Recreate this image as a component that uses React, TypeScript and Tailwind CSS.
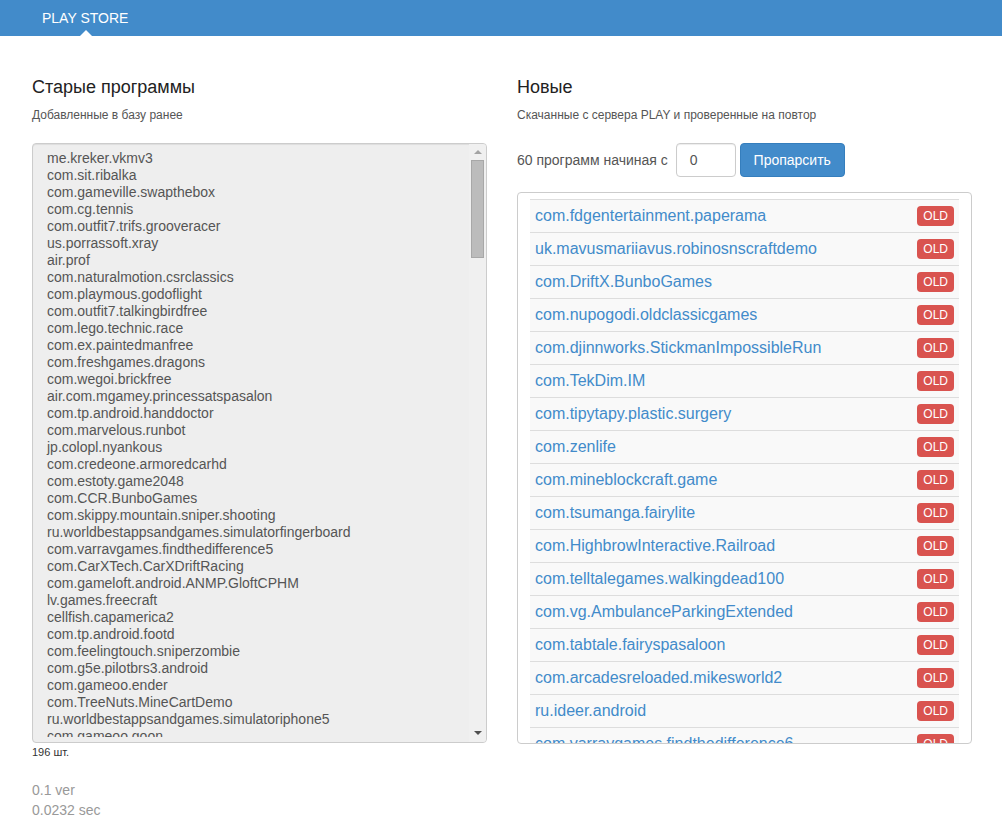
const oldApps = [
  "me.kreker.vkmv3",
  "com.sit.ribalka",
  "com.gameville.swapthebox",
  "com.cg.tennis",
  "com.outfit7.trifs.grooveracer",
  "us.porrassoft.xray",
  "air.prof",
  "com.naturalmotion.csrclassics",
  "com.playmous.godoflight",
  "com.outfit7.talkingbirdfree",
  "com.lego.technic.race",
  "com.ex.paintedmanfree",
  "com.freshgames.dragons",
  "com.wegoi.brickfree",
  "air.com.mgamey.princessatspasalon",
  "com.tp.android.handdoctor",
  "com.marvelous.runbot",
  "jp.colopl.nyankous",
  "com.credeone.armoredcarhd",
  "com.estoty.game2048",
  "com.CCR.BunboGames",
  "com.skippy.mountain.sniper.shooting",
  "ru.worldbestappsandgames.simulatorfingerboard",
  "com.varravgames.findthedifference5",
  "com.CarXTech.CarXDriftRacing",
  "com.gameloft.android.ANMP.GloftCPHM",
  "lv.games.freecraft",
  "cellfish.capamerica2",
  "com.tp.android.footd",
  "com.feelingtouch.sniperzombie",
  "com.g5e.pilotbrs3.android",
  "com.gameoo.ender",
  "com.TreeNuts.MineCartDemo",
  "ru.worldbestappsandgames.simulatoriphone5",
  "com.gameoo.goon",
  "com.gameoo.run",
]

const newApps = [
  "com.fdgentertainment.paperama",
  "uk.mavusmariiavus.robinosnscraftdemo",
  "com.DriftX.BunboGames",
  "com.nupogodi.oldclassicgames",
  "com.djinnworks.StickmanImpossibleRun",
  "com.TekDim.IM",
  "com.tipytapy.plastic.surgery",
  "com.zenlife",
  "com.mineblockcraft.game",
  "com.tsumanga.fairylite",
  "com.HighbrowInteractive.Railroad",
  "com.telltalegames.walkingdead100",
  "com.vg.AmbulanceParkingExtended",
  "com.tabtale.fairyspasaloon",
  "com.arcadesreloaded.mikesworld2",
  "ru.ideer.android",
  "com.varravgames.findthedifference6",
  "com.varravgames.findthedifference7",
]

export default function App() {
  return (
    <div className="min-h-[837px] bg-white text-[#333] font-['Liberation_Sans',Arial,sans-serif]">

      {/* Navbar */}

      <div className="h-[36px] bg-[#428bca] px-[42px] flex items-center">
        <div className="relative h-full flex items-center text-white text-[14px]">
          PLAY STORE
          <div className="absolute bottom-0 left-[38px] w-0 h-0 border-l-[6px] border-r-[6px] border-b-[6px] border-l-transparent border-r-transparent border-b-white" />
        </div>
      </div>

      <div className="pl-[32px] flex gap-[30px]">

        {/* Old apps */}

        <div className="w-[455px] shrink-0">
          <h3 className="mt-[41px] text-[18px] leading-[20px] text-[#222]">Старые программы</h3>
          <p className="mt-[10px] text-[12px] leading-[16px] text-[#555]">Добавленные в базу ранее</p>

          <div className="mt-[20px] h-[600px] flex overflow-hidden rounded-[4px] border border-[#ccc] bg-[#eee] shadow-[inset_0_1px_1px_rgba(0,0,0,0.075)]">
            <div className="flex-1 self-start h-[593px] pl-[14px] pt-[6px] text-[14px] leading-[17px] text-[#555] overflow-hidden">
              {oldApps.map((a) => (
                <div key={a} className="whitespace-nowrap">{a}</div>
              ))}
            </div>
            <div className="w-[17px] bg-[#f0f0f0] flex flex-col items-center">
              <div className="h-[16px] flex items-center justify-center">
                <div className="w-0 h-0 border-l-[4px] border-r-[4px] border-b-[4px] border-l-transparent border-r-transparent border-b-[#a3a3a3]" />
              </div>
              <div className="w-[13px] h-[98px] bg-[#bcbcbc] border border-[#a8a8a8]" />
              <div className="flex-1" />
              <div className="h-[18px] flex items-center justify-center">
                <div className="w-0 h-0 border-l-[4px] border-r-[4px] border-t-[4px] border-l-transparent border-r-transparent border-t-[#505050]" />
              </div>
            </div>
          </div>

          <div className="pt-[1px] text-[11px] leading-[16px] text-[#333]">196 шт.</div>

          <div className="mt-[20px] text-[14px] leading-[20px] text-[#999]">
            <div>0.1 ver</div>
            <div>0.0232 sec</div>
          </div>
        </div>

        {/* New apps */}

        <div className="w-[455px] shrink-0">
          <h3 className="mt-[41px] text-[18px] leading-[20px] text-[#222]">Новые</h3>
          <p className="mt-[10px] text-[12px] leading-[16px] text-[#555]">Скачанные с сервера PLAY и проверенные на повтор</p>

          <div className="mt-[20px] flex items-center text-[14px]">
            <span className="text-[#555]">60 программ начиная с</span>
            <div className="ml-[8px] w-[60px] h-[34px] rounded-[4px] border border-[#ccc] flex items-center px-[13px] text-[#555] shadow-[inset_0_1px_1px_rgba(0,0,0,0.075)]">
              0
            </div>
            <button className="ml-[4px] w-[105px] h-[34px] rounded-[4px] bg-[#428bca] border border-[#357ebd] text-white text-[14px]">
              Пропарсить
            </button>
          </div>

          <div className="mt-[15px] h-[552px] overflow-hidden rounded-[4px] border border-[#ccc] px-[12px] pt-[6px]">
            {newApps.map((a) => (
              <div key={a} className="h-[33px] flex items-center justify-between border-t border-[#ddd] bg-[#f9f9f9] pl-[5px] pr-[5px]">
                <span className="text-[16px] text-[#428bca] whitespace-nowrap">{a}</span>
                <span className="h-[20px] px-[6px] rounded-[4px] bg-[#d9534f] text-white text-[12px] leading-[20px]">OLD</span>
              </div>
            ))}
          </div>
        </div>

      </div>

    </div>
  )
}
